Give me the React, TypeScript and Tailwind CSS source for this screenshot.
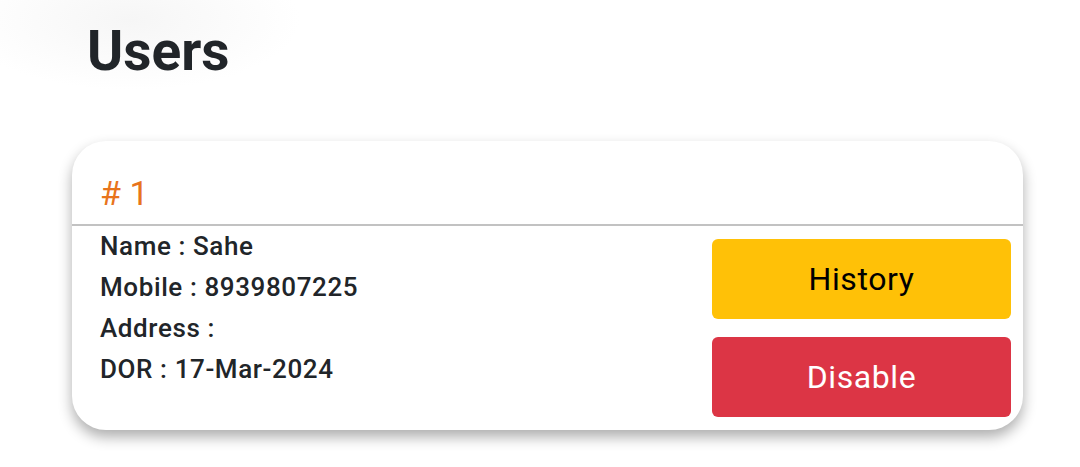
import React from 'react';

type User = {
  id: number;
  name: string;
  mobile: string;
  address: string;
  dor: string;
};

const users: User[] = [
  { id: 1, name: 'Sahe', mobile: '8939807225', address: '', dor: '17-Mar-2024' },
];

const UserCard: React.FC<{ user: User }> = ({ user }) => {
  return (
    <div className="bg-white rounded-[34px] shadow-[0_7px_14px_rgba(0,0,0,0.32)]">
      <div className="pl-[28px] pt-[35px] pb-[14px] border-b-2 border-[#c2c2c2]">
        <h2 className="text-[34px] leading-[34px] text-[#e8741c]"># {user.id}</h2>
      </div>
      <div className="flex justify-between pl-[28px] pr-[12px] pb-[13px]">
        <div className="text-[26px] tracking-[0.6px] leading-[41px] font-medium text-[#212529]">
          <p>Name : {user.name}</p>
          <p>Mobile : {user.mobile}</p>
          <p>Address : {user.address}</p>
          <p>DOR : {user.dor}</p>
        </div>
        <div className="flex flex-col gap-[18px] pt-[13px]">
          <button className="w-[299px] h-[80px] rounded-[6px] bg-[#ffc107] text-[32px] tracking-[0.6px] text-black">
            History
          </button>
          <button className="w-[299px] h-[80px] rounded-[6px] bg-[#dc3545] text-[32px] tracking-[0.6px] text-white">
            Disable
          </button>
        </div>
      </div>
    </div>
  );
};

export default function App() {
  return (
    <div
      className="min-h-[467px] bg-white bg-[radial-gradient(ellipse_170px_70px_at_130px_20px,#f6f6f6,transparent)] pl-[72px] pr-[57px] pt-[23px] pb-[37px] font-['Roboto',sans-serif]"
    >
      <h1 className="ml-[15px] text-[55px] leading-[56px] font-bold text-[#212529]">Users</h1>
      <div className="mt-[62px]">
        {users.map((u) => (
          <UserCard key={u.id} user={u} />
        ))}
      </div>
    </div>
  );
}
